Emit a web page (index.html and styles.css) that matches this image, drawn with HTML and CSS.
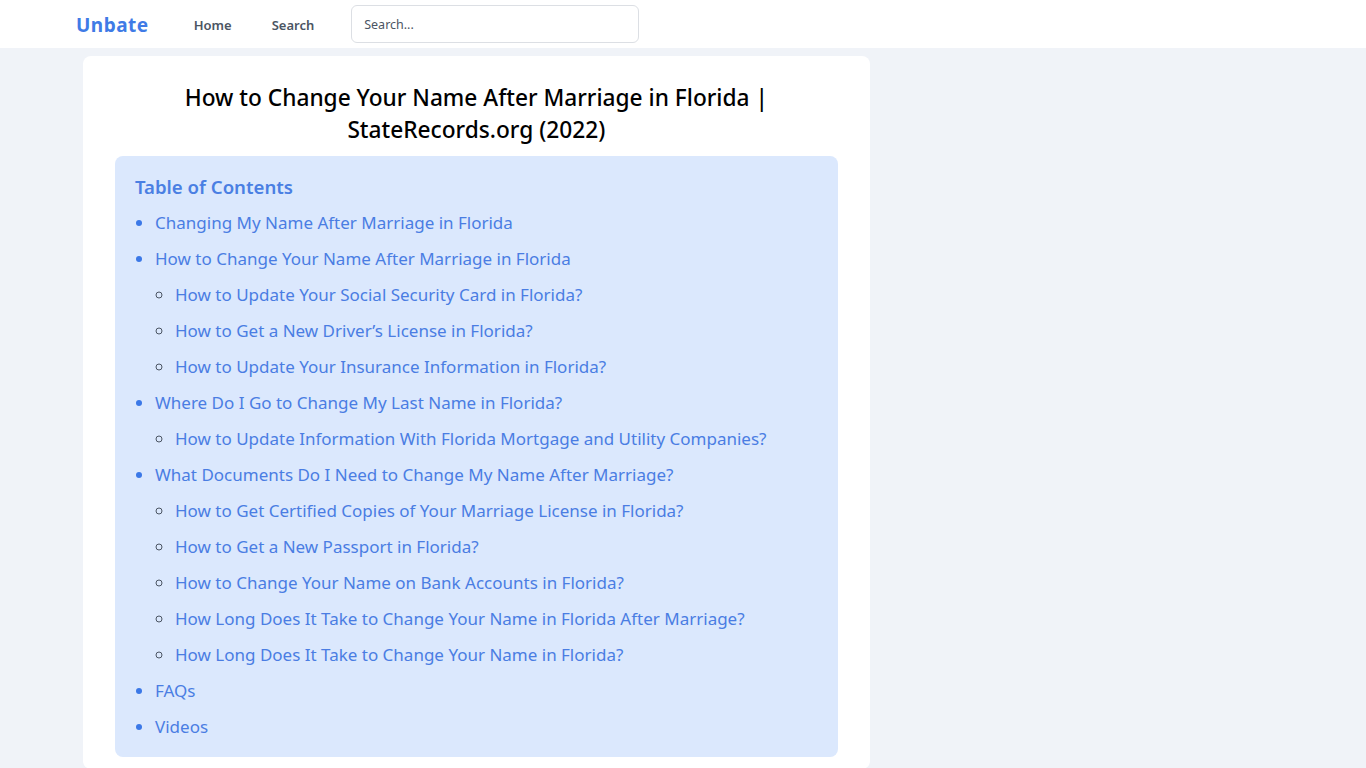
FILE: index.html
```html
<!DOCTYPE html>
<html lang="en">
<head>
    <meta charset="UTF-8">
    <meta name="viewport" content="width=device-width, initial-scale=1.0">
    <title>How to Change Your Name After Marriage in Florida</title>
    <link rel="stylesheet" href="styles.css">
</head>
<body>
    <header class="topbar">
        <div class="topbar-inner">
            <a class="logo" href="#">Unbate</a>
            <nav class="nav">
                <a href="#">Home</a>
                <a href="#">Search</a>
            </nav>
            <input class="search" type="text" placeholder="Search...">
        </div>
    </header>

    <main class="layout">
        <article class="card">
            <h1 class="title">How to Change Your Name After Marriage in Florida | StateRecords.org (2022)</h1>
            <div class="toc">
                <h2>Table of Contents</h2>
                <ul>
                    <li><a href="#">Changing My Name After Marriage in Florida</a></li>
                    <li><a href="#">How to Change Your Name After Marriage in Florida</a>
                        <ul>
                            <li><a href="#">How to Update Your Social Security Card in Florida?</a></li>
                            <li><a href="#">How to Get a New Driver’s License in Florida?</a></li>
                            <li><a href="#">How to Update Your Insurance Information in Florida?</a></li>
                        </ul>
                    </li>
                    <li><a href="#">Where Do I Go to Change My Last Name in Florida?</a>
                        <ul>
                            <li><a href="#">How to Update Information With Florida Mortgage and Utility Companies?</a></li>
                        </ul>
                    </li>
                    <li><a href="#">What Documents Do I Need to Change My Name After Marriage?</a>
                        <ul>
                            <li><a href="#">How to Get Certified Copies of Your Marriage License in Florida?</a></li>
                            <li><a href="#">How to Get a New Passport in Florida?</a></li>
                            <li><a href="#">How to Change Your Name on Bank Accounts in Florida?</a></li>
                            <li><a href="#">How Long Does It Take to Change Your Name in Florida After Marriage?</a></li>
                            <li><a href="#">How Long Does It Take to Change Your Name in Florida?</a></li>
                        </ul>
                    </li>
                    <li><a href="#">FAQs</a></li>
                    <li><a href="#">Videos</a></li>
                </ul>
            </div>
        </article>
        <aside class="sidebar"></aside>
    </main>
</body>
</html>
```

FILE: styles.css
```css
body {
    margin: 0;
    font-family: "Segoe UI", "Noto Sans", "Open Sans", sans-serif;
    background: #f0f3f8;
    color: #111;
}

a {
    text-decoration: none;
}

.topbar {
    background: #ffffff;
    height: 48px;
}

.topbar-inner {
    display: flex;
    align-items: center;
    height: 48px;
    padding-left: 76px;
}

.logo {
    font-size: 19px;
    font-weight: 700;
    color: #3f7be6;
    letter-spacing: 0.5px;
    padding-top: 2px;
}

.nav {
    display: flex;
    gap: 40px;
    margin-left: 45px;
    padding-top: 2px;
}

.nav a {
    font-size: 13px;
    font-weight: 600;
    color: #4b5563;
}

.search {
    margin-left: 37px;
    width: 288px;
    height: 38px;
    box-sizing: border-box;
    padding: 0 12px;
    border: 1px solid #dcdfe4;
    border-radius: 6px;
    font-family: inherit;
    font-size: 12.5px;
    color: #333;
}

.search::placeholder {
    color: #4b5563;
}

.layout {
    display: grid;
    grid-template-columns: 2fr 1fr;
    gap: 20px;
    width: 1200px;
    margin: 8px auto 0;
}

.card {
    background: #ffffff;
    border-radius: 8px;
    padding: 26px 32px 12px;
}

.title {
    margin: 0 0 10px;
    text-align: center;
    font-size: 22.7px;
    font-weight: 500;
    line-height: 32px;
    color: #000;
}

.toc {
    background: #dbe8fd;
    border-radius: 8px;
    padding: 18px 20px 12px;
}

.toc h2 {
    margin: 0 0 5px;
    font-size: 18.6px;
    font-weight: 600;
    line-height: 26px;
    color: #4a7fe3;
}

.toc ul {
    margin: 0;
    padding-left: 20px;
    color: #3b78e7;
}

.toc ul ul {
    list-style: circle;
    padding-left: 20px;
    color: #4b5563;
}

.toc li {
    font-size: 17px;
    line-height: 36px;
}

.toc a {
    color: #4a7de3;
}
```
